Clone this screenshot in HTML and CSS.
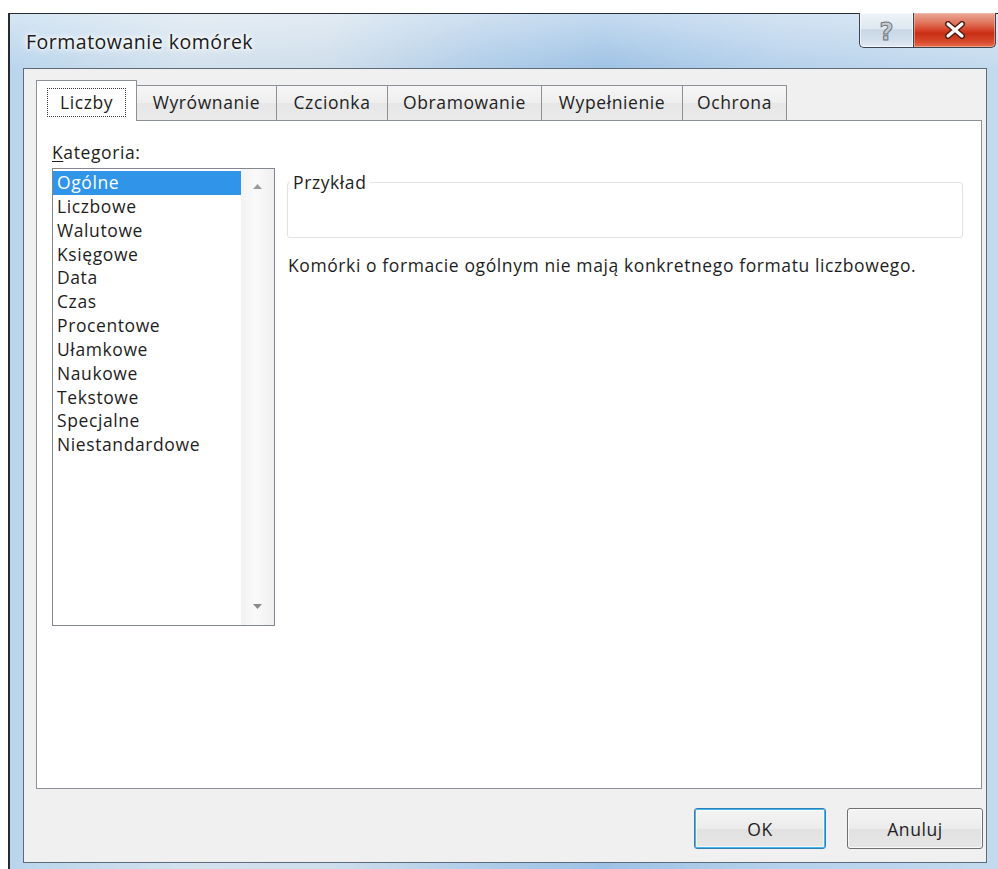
FILE: index.html
```html
<!DOCTYPE html>
<html lang="pl">
<head>
<meta charset="utf-8">
<title>Formatowanie komórek</title>
<link rel="stylesheet" href="styles.css">
</head>
<body>
<div class="window">
  <div class="titlebar">
    <span class="title">Formatowanie komórek</span>
    <div class="caption-buttons">
      <div class="cap-btn help"><span class="help-glyph">?</span></div>
      <div class="cap-btn close">
        <svg class="close-glyph" width="22" height="18" viewBox="0 0 22 18">
          <path d="M4 3 L18 15 M18 3 L4 15" stroke="#4a1c14" stroke-width="6" stroke-linecap="round" fill="none"/>
          <path d="M4 3 L18 15 M18 3 L4 15" stroke="#ffffff" stroke-width="3.2" stroke-linecap="round" fill="none"/>
        </svg>
      </div>
    </div>
  </div>

  <div class="client">
    <div class="tabstrip">
      <div class="tab tab-numbers selected"><span class="focus">Liczby</span></div>
      <div class="tab tab-align">Wyrównanie</div>
      <div class="tab tab-font">Czcionka</div>
      <div class="tab tab-border">Obramowanie</div>
      <div class="tab tab-fill">Wypełnienie</div>
      <div class="tab tab-protect">Ochrona</div>
    </div>

    <div class="panel">
      <div class="category">
        <div class="field-label"><span class="accel">K</span>ategoria:</div>
        <div class="listbox">
          <ul class="items">
            <li class="active">Ogólne</li>
            <li>Liczbowe</li>
            <li>Walutowe</li>
            <li>Księgowe</li>
            <li>Data</li>
            <li>Czas</li>
            <li>Procentowe</li>
            <li>Ułamkowe</li>
            <li>Naukowe</li>
            <li>Tekstowe</li>
            <li>Specjalne</li>
            <li>Niestandardowe</li>
          </ul>
          <div class="scrollbar">
            <svg width="9" height="5" viewBox="0 0 9 5"><path d="M0 5 L4.5 0 L9 5 Z" fill="#9a9a9a"/></svg>
            <svg width="9" height="5" viewBox="0 0 9 5"><path d="M0 0 L4.5 5 L9 0 Z" fill="#8a8a8a"/></svg>
          </div>
        </div>
      </div>

      <div class="details">
        <fieldset class="sample">
          <legend>Przykład</legend>
        </fieldset>
        <p class="desc">Komórki o formacie ogólnym nie mają konkretnego formatu liczbowego.</p>
      </div>
    </div>

    <div class="footer">
      <button class="btn btn-ok">OK</button>
      <button class="btn btn-cancel">Anuluj</button>
    </div>
  </div>
</div>
</body>
</html>
```

FILE: styles.css
```css
* {
  box-sizing: border-box;
}

html,
body {
  margin: 0;
  padding: 0;
}

body {
  width: 998px;
  height: 869px;
  overflow: hidden;
  background: #ffffff;
  font-family: "Open Sans", "Noto Sans", sans-serif;
  color: #1e1e1e;
}

/* Window frame (glass) */
.window {
  margin: 13px 0 0 8px;
  width: 990px;
  height: 856px;
  border-left: 2px solid #262b31;
  border-top: 1px solid #262b31;
  padding-bottom: 6px;
  display: flex;
  flex-direction: column;
  background:
    linear-gradient(180deg, rgba(255, 255, 255, 0.4) 0px, rgba(255, 255, 255, 0) 56px),
    linear-gradient(90deg, #b9d5ec 0%, #d3e1ed 18%, #cfdeeb 32%, #afcce8 48%, #9ec2e5 60%, #b6d1eb 78%, #c3daee 100%);
}

.titlebar {
  height: 54px;
  display: flex;
  justify-content: space-between;
  align-items: flex-start;
  flex-shrink: 0;
}

.title {
  padding-left: 16px;
  margin-top: 15px;
  font-size: 19.5px;
  letter-spacing: 0.5px;
  line-height: 26px;
  color: #1a1a1a;
  text-shadow: 0 0 6px #ffffff, 0 0 10px #ffffff, 0 0 3px #ffffff;
}

.caption-buttons {
  display: flex;
  margin-top: -1px;
  margin-right: 2px;
}

.cap-btn {
  height: 35px;
  display: flex;
  align-items: center;
  justify-content: center;
  border: 1px solid #3d4650;
  border-top: none;
}

.help {
  width: 54px;
  border-right: none;
  border-bottom-left-radius: 5px;
  background: linear-gradient(180deg, #eef3f8 0%, #dfe8f1 45%, #c9d7e5 50%, #d3dfeb 80%, #e2ebf4 100%);
  box-shadow: inset 0 0 0 1px rgba(255, 255, 255, 0.6);
}

.help-glyph {
  font-family: "DejaVu Sans", sans-serif;
  font-weight: bold;
  font-size: 24px;
  line-height: 24px;
  margin-top: 3px;
  color: #c4cad0;
  -webkit-text-stroke: 1px #6e767e;
}

.close {
  width: 83px;
  border-bottom-right-radius: 5px;
  background: linear-gradient(180deg, #eaa999 0%, #e0735b 30%, #d4432a 50%, #c92e14 60%, #d84a2c 85%, #e8704f 100%);
  box-shadow: inset 0 0 0 1px rgba(255, 200, 190, 0.5);
}

/* Client area */
.client {
  margin: 0 11px 0 13px;
  height: 795px;
  border: 1px solid #5d6a78;
  background: #f0f0f0;
  padding: 11px 4px 0 12px;
  display: flex;
  flex-direction: column;
  font-size: 17.5px;
  letter-spacing: 0.6px;
}

.tabstrip {
  display: flex;
  align-items: flex-end;
  height: 40px;
  flex-shrink: 0;
}

.tab {
  height: 35px;
  border: 1px solid #8c9097;
  border-left: none;
  border-bottom: none;
  background: linear-gradient(180deg, #f6f6f6 0%, #eeeeee 50%, #e6e6e6 51%, #ebebeb 100%);
  line-height: 33px;
  text-align: center;
  color: #1e1e1e;
  white-space: nowrap;
}

.tab.selected {
  position: relative;
  z-index: 2;
  height: 41px;
  margin-bottom: -1px;
  border-left: 1px solid #8c9097;
  background: #ffffff;
  padding-top: 7px;
  line-height: 27px;
}

.focus {
  display: inline-block;
  padding: 0 12px;
  line-height: 27px;
  border: 1px dotted #3a3a3a;
}

.tab-numbers { width: 101px; }
.tab-align { width: 140px; }
.tab-font { width: 111px; }
.tab-border { width: 154px; }
.tab-fill { width: 141px; }
.tab-protect { width: 104px; }

/* Tab page */
.panel {
  height: 669px;
  flex-shrink: 0;
  border: 1px solid #8c9097;
  background: #ffffff;
  padding: 19px 0 0 15px;
  display: flex;
  gap: 12px;
}

.field-label {
  line-height: 24px;
  height: 24px;
  margin-bottom: 4px;
}

.accel {
  text-decoration: underline;
  text-underline-offset: 2px;
}

.listbox {
  width: 223px;
  height: 458px;
  border: 1px solid #828790;
  display: flex;
  background: #ffffff;
}

.items {
  list-style: none;
  margin: 0;
  padding: 2px 0 0 0;
  width: 188px;
  flex-shrink: 0;
}

.items li {
  height: 23.85px;
  line-height: 23px;
  padding-left: 4px;
  white-space: nowrap;
}

.items li.active {
  background: #3094e8;
  color: #ffffff;
}

.scrollbar {
  flex: 1;
  display: flex;
  flex-direction: column;
  justify-content: space-between;
  align-items: center;
  padding: 15px 0 16px;
  background: linear-gradient(90deg, #f2f2f2 0%, #fafafa 45%, #efefef 100%);
}

.details {
  flex: 1;
  padding-top: 30px;
  padding-right: 18px;
}

.sample {
  margin: 0;
  height: 68px;
  padding: 0 2px;
  border: 1px solid #e2e2e2;
  border-radius: 3px;
}

.sample legend {
  padding: 0 3px;
  line-height: 24px;
}

.desc {
  margin: 15px 0 0 1px;
  line-height: 24px;
}

/* Dialog buttons */
.footer {
  display: flex;
  justify-content: flex-end;
  gap: 21px;
  padding-top: 19px;
  margin-right: -1px;
}

.btn {
  height: 41px;
  border: 1px solid #707070;
  border-radius: 3px;
  font-family: inherit;
  font-size: 17.5px;
  letter-spacing: 0.6px;
  color: #1e1e1e;
  background: linear-gradient(180deg, #f4f4f4 0%, #ececec 50%, #e1e1e1 51%, #e6e6e6 100%);
  box-shadow: inset 0 0 0 1px rgba(255, 255, 255, 0.7);
  padding: 0;
}

.btn-ok {
  width: 132px;
  border-color: #2f7fb5;
  box-shadow: inset 0 0 0 1px #48b4ec, inset 0 0 0 2px rgba(255, 255, 255, 0.6);
}

.btn-cancel {
  width: 136px;
}
```
